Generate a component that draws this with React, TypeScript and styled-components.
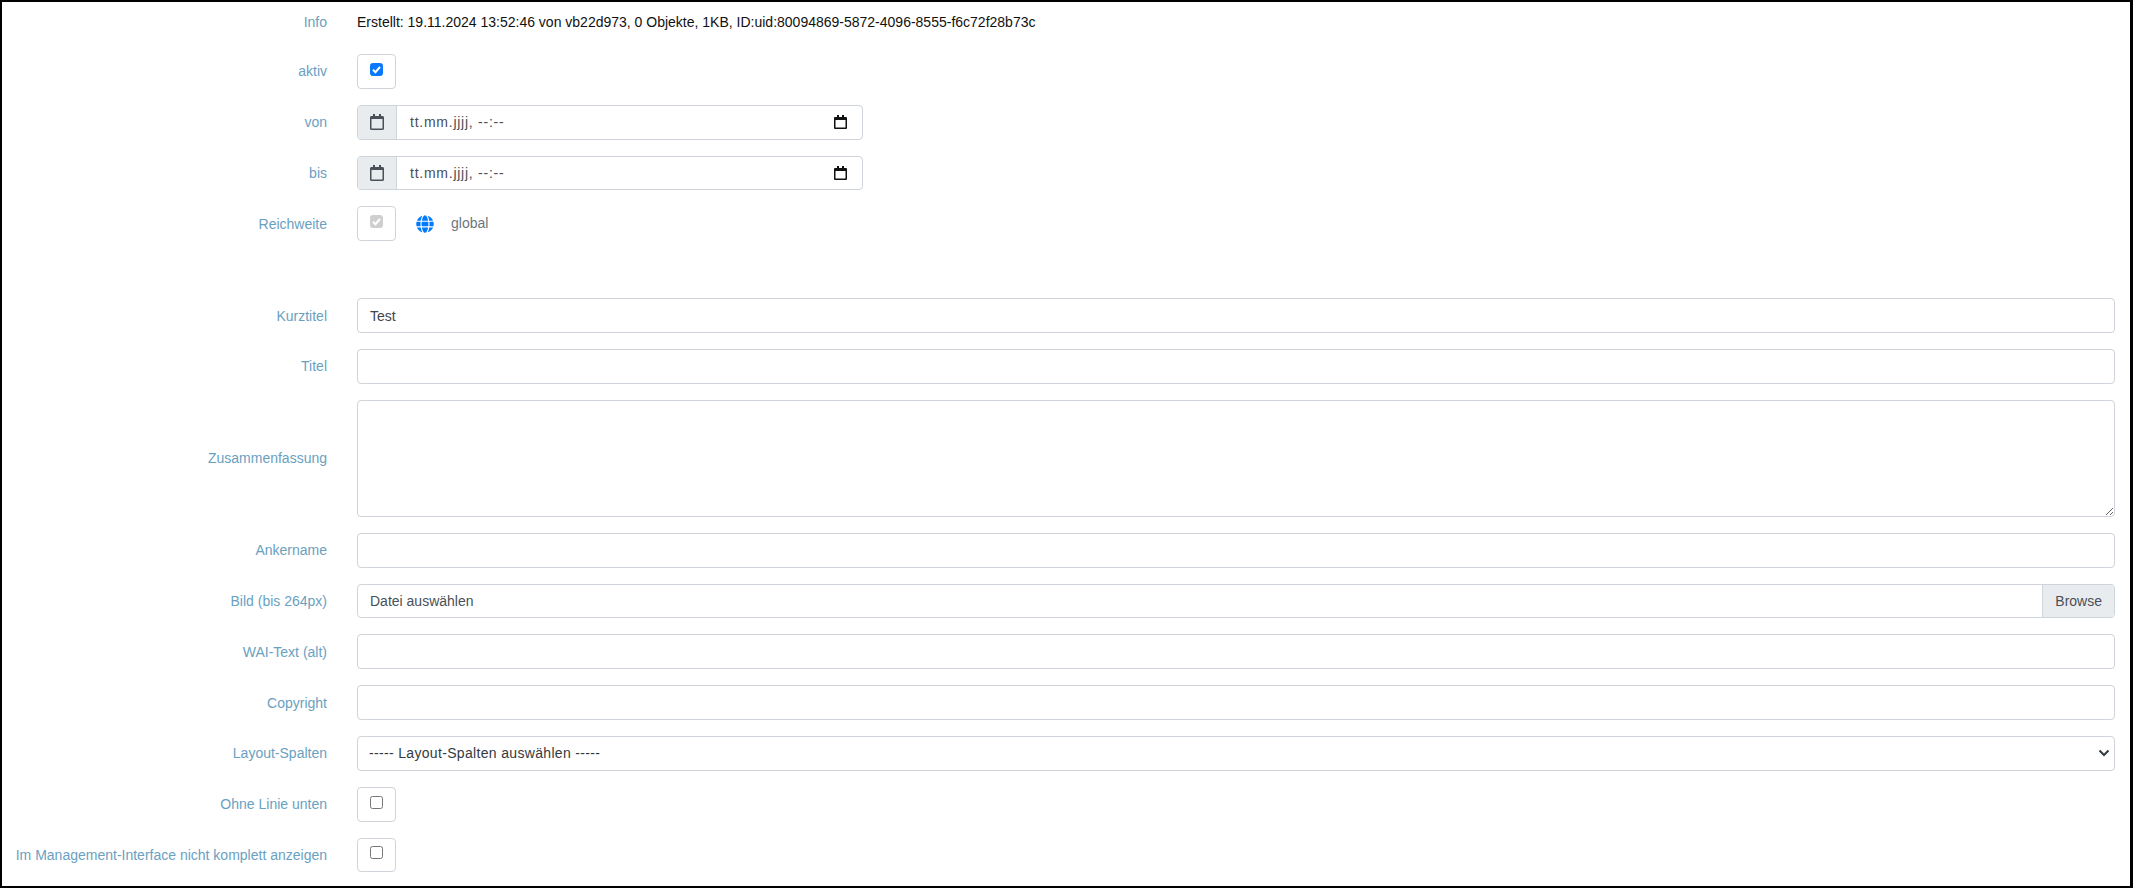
import React from 'react';
import styled, { createGlobalStyle } from 'styled-components';
import { FaGlobe, FaRegCalendar } from 'react-icons/fa';

const GlobalStyle = createGlobalStyle`
  html, body {
    margin: 0;
    padding: 0;
    background: #fff;
  }
  body {
    font-family: "Liberation Sans", Arial, sans-serif;
    font-size: 14px;
    color: #212529;
  }
`;

const checkMark = (stroke: string) =>
  `url("data:image/svg+xml,%3Csvg xmlns='http://www.w3.org/2000/svg' viewBox='0 0 13 13'%3E%3Cpath d='M3 6.8l2.4 2.4L10 4' fill='none' stroke='${stroke}' stroke-width='2'/%3E%3C/svg%3E")`;

const chevron = `url("data:image/svg+xml,%3Csvg xmlns='http://www.w3.org/2000/svg' viewBox='0 0 12 8'%3E%3Cpath d='M1.5 1.5L6 6l4.5-4.5' fill='none' stroke='%23343a40' stroke-width='2'/%3E%3C/svg%3E")`;

const Frame = styled.div`
  box-sizing: border-box;
  width: 2133px;
  height: 888px;
  overflow: hidden;
  border-style: solid;
  border-color: #000;
  border-width: 2px 3px 2px 2px;
  padding: 0 15px 0 0;
`;

const Form = styled.form`
  display: flex;
  flex-direction: column;
  gap: 16px;
`;

const Row = styled.div<{ $spaced?: boolean }>`
  display: grid;
  grid-template-columns: 325px 1fr;
  column-gap: 30px;
  align-items: center;
  margin-top: ${p => (p.$spaced ? '41px' : '0')};
`;

const Label = styled.label`
  text-align: right;
  color: #6aa1c1;
  white-space: nowrap;
`;

const InfoText = styled.div`
  color: #111;
  line-height: 20px;
  padding: 10px 0 6px;
`;

const InfoLabel = styled(Label)`
  padding: 10px 0 6px;
  line-height: 20px;
`;

const CheckBox = styled.div`
  box-sizing: border-box;
  width: 39px;
  height: 34.8px;
  border: 1px solid #ced4da;
  border-radius: 4px;
  display: flex;
  align-items: center;
  justify-content: center;
`;

const Tick = styled.input.attrs({ type: 'checkbox' })`
  appearance: none;
  box-sizing: border-box;
  width: 13px;
  height: 13px;
  margin: 0 0 4px;
  border: 1px solid #767676;
  border-radius: 2.5px;
  background: #fff;

  &:checked {
    border-color: #0a78ff;
    background: #0a78ff ${checkMark('white')} center / 13px no-repeat;
  }
  &:checked:disabled {
    border-color: #cfcfcf;
    background: #cfcfcf ${checkMark('white')} center / 13px no-repeat;
  }
`;

const ScopeLine = styled.div`
  display: flex;
  align-items: center;
`;

const ScopeIcon = styled(FaGlobe)`
  width: 18px;
  height: 18px;
  color: #007bff;
  margin: 0 17px 0 20px;
`;

const ScopeText = styled.span`
  color: #6c757d;
  margin-bottom: 1px;
`;

const DateGroup = styled.div`
  box-sizing: border-box;
  display: flex;
  width: 506px;
  height: 34.8px;
  border: 1px solid #ced4da;
  border-radius: 4px;
  overflow: hidden;
`;

const DateAddon = styled.span`
  flex: 0 0 39px;
  box-sizing: border-box;
  display: flex;
  align-items: center;
  justify-content: center;
  background: #e9ecef;
  border-right: 1px solid #ced4da;
  color: #495057;
  font-size: 16px;
`;

const DateValue = styled.div`
  flex: 1;
  display: flex;
  align-items: center;
  justify-content: space-between;
  padding: 0 15px 0 13px;
  color: #495057;
  letter-spacing: 0.75px;
`;

const PickerIcon = styled.svg`
  width: 13px;
  height: 14px;
`;

const fieldBase = `
  box-sizing: border-box;
  display: block;
  width: 100%;
  margin: 0;
  border: 1px solid #ced4da;
  border-radius: 4px;
  background-color: #fff;
  color: #495057;
  font-family: inherit;
  font-size: inherit;
  outline: none;
`;

const TextInput = styled.input`
  ${fieldBase}
  height: 34.8px;
  padding: 0 12px;
  color: #3f454b;
`;

const TextArea = styled.textarea`
  ${fieldBase}
  height: 117px;
  padding: 6px 12px;
  resize: vertical;
`;

const Select = styled.select`
  ${fieldBase}
  height: 34.8px;
  padding: 0 28px 0 11px;
  color: #343a40;
  letter-spacing: 0.33px;
  appearance: none;
  background-image: ${chevron};
  background-repeat: no-repeat;
  background-position: right 4px center;
  background-size: 12px 8px;
`;

const FilePicker = styled.div`
  box-sizing: border-box;
  display: flex;
  align-items: center;
  height: 34.8px;
  border: 1px solid #ced4da;
  border-radius: 4px;
  overflow: hidden;
  color: #495057;
`;

const FileName = styled.span`
  flex: 1;
  padding: 0 12px;
`;

const BrowseButton = styled.span`
  align-self: stretch;
  display: flex;
  align-items: center;
  padding: 0 12px;
  background: #e9ecef;
  border-left: 1px solid #ced4da;
`;

const DateField = () => (
  <DateGroup>
    <DateAddon>
      <FaRegCalendar />
    </DateAddon>
    <DateValue>
      tt.mm.jjjj, --:--
      <PickerIcon viewBox="0 0 13 14">
        <path d="M3 0h2v2h3V0h2v2h2a1 1 0 0 1 1 1v10a1 1 0 0 1-1 1H1a1 1 0 0 1-1-1V3a1 1 0 0 1 1-1h2zM1.5 5v7.5h10V5z" fill="#111" />
      </PickerIcon>
    </DateValue>
  </DateGroup>
);

const textRows = (label: string, value = '') => (
  <Row>
    <Label>{label}</Label>
    <TextInput defaultValue={value} />
  </Row>
);

export default function App() {
  return (
    <>
      <GlobalStyle />
      <Frame>
        <Form>
          <Row>
            <InfoLabel>Info</InfoLabel>
            <InfoText>Erstellt: 19.11.2024 13:52:46 von vb22d973, 0 Objekte, 1KB, ID:uid:80094869-5872-4096-8555-f6c72f28b73c</InfoText>
          </Row>
          <Row>
            <Label>aktiv</Label>
            <CheckBox><Tick defaultChecked /></CheckBox>
          </Row>
          <Row>
            <Label>von</Label>
            <DateField />
          </Row>
          <Row>
            <Label>bis</Label>
            <DateField />
          </Row>
          <Row>
            <Label>Reichweite</Label>
            <ScopeLine>
              <CheckBox><Tick defaultChecked disabled /></CheckBox>
              <ScopeIcon />
              <ScopeText>global</ScopeText>
            </ScopeLine>
          </Row>
          <Row $spaced>
            <Label>Kurztitel</Label>
            <TextInput defaultValue="Test" />
          </Row>
          {textRows('Titel')}
          <Row>
            <Label>Zusammenfassung</Label>
            <TextArea />
          </Row>
          {textRows('Ankername')}
          <Row>
            <Label>Bild (bis 264px)</Label>
            <FilePicker>
              <FileName>Datei auswählen</FileName>
              <BrowseButton>Browse</BrowseButton>
            </FilePicker>
          </Row>
          {textRows('WAI-Text (alt)')}
          {textRows('Copyright')}
          <Row>
            <Label>Layout-Spalten</Label>
            <Select defaultValue="">
              <option value="">----- Layout-Spalten auswählen -----</option>
            </Select>
          </Row>
          <Row>
            <Label>Ohne Linie unten</Label>
            <CheckBox><Tick /></CheckBox>
          </Row>
          <Row>
            <Label>Im Management-Interface nicht komplett anzeigen</Label>
            <CheckBox><Tick /></CheckBox>
          </Row>
        </Form>
      </Frame>
    </>
  );
}
